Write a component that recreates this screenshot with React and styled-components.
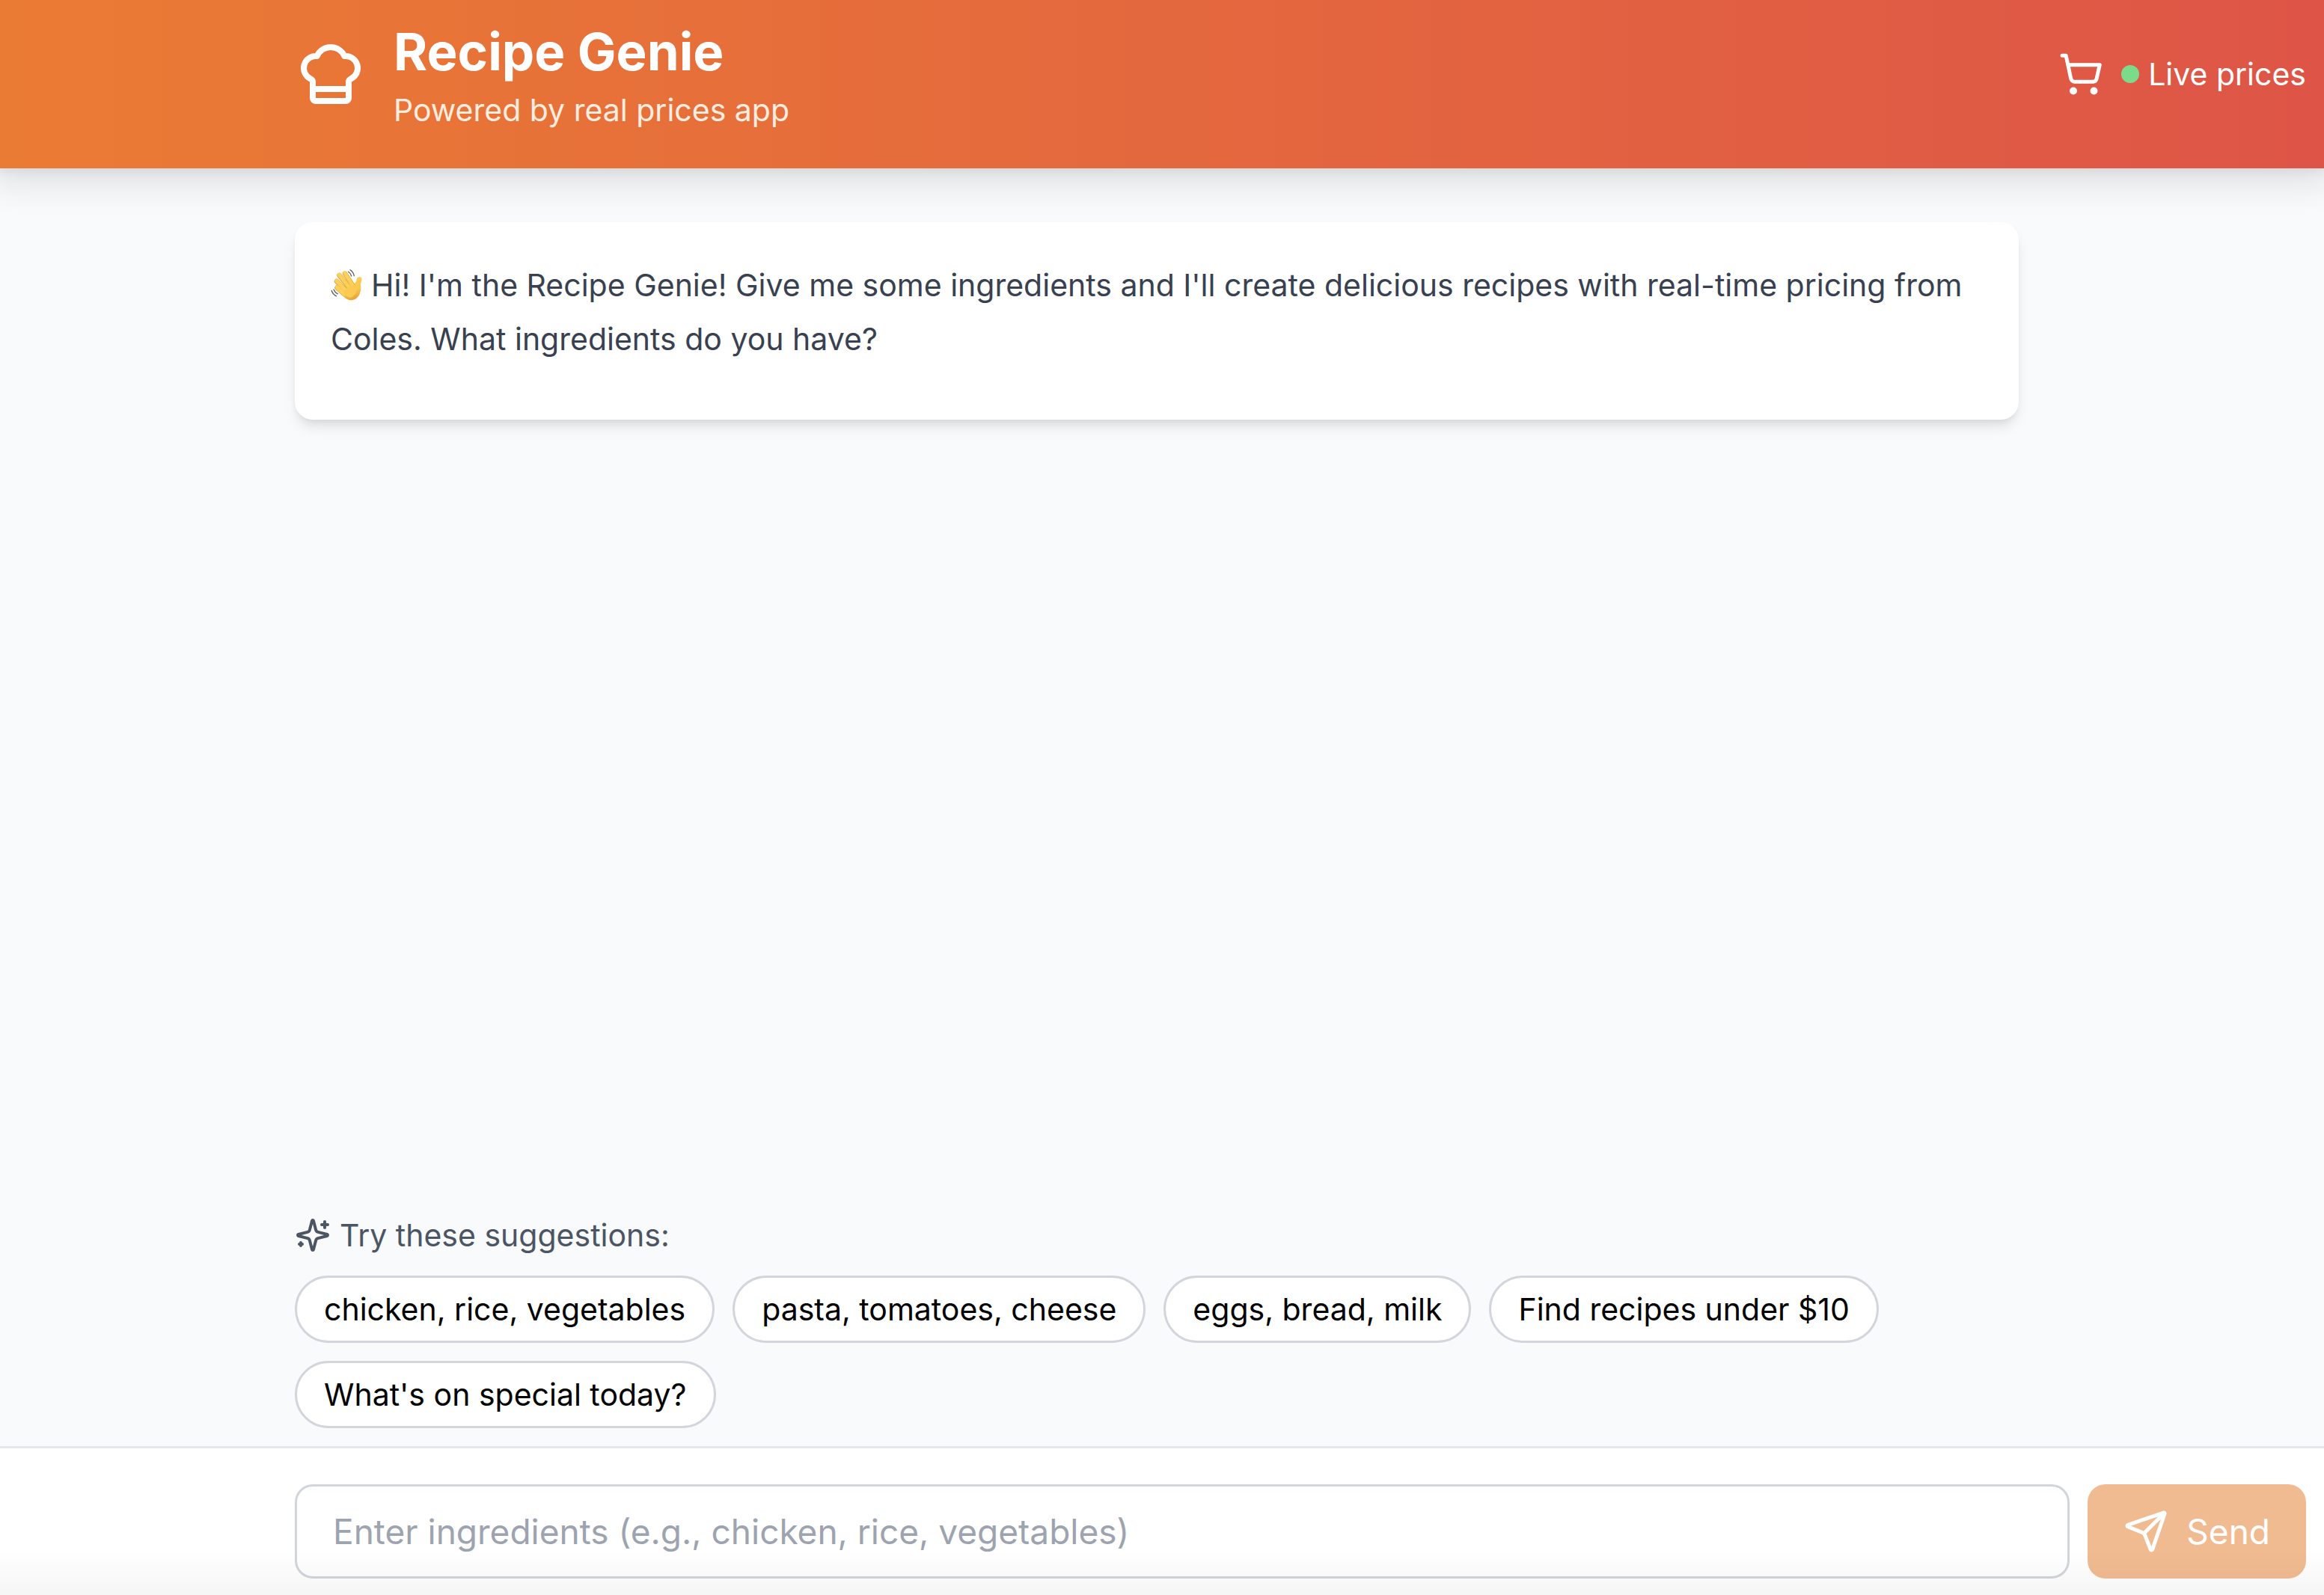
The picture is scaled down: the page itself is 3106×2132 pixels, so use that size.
import React, { useState } from "react";
import styled, { createGlobalStyle } from "styled-components";
import { ChefHat, ShoppingCart, Send } from "lucide-react";

const GlobalStyle = createGlobalStyle`
  *, *::before, *::after { box-sizing: border-box; }
  body {
    margin: 0;
    background: #f9fafc;
    font-family: Inter, "Liberation Sans", sans-serif;
    color: #000;
  }
  button, input { font: inherit; }
  h1, p { margin: 0; }
`;

const Page = styled.div`
  display: flex;
  flex-direction: column;
  height: 100vh;
  overflow: hidden;
`;

const Container = styled.div`
  width: 100%;
  max-width: 2712px;
  margin-left: auto;
  padding-right: 24px;
`;

const Header = styled.header`
  background: linear-gradient(to right, #ea7b34, #de5547);
  color: #fff;
  padding: 21px 0 48px;
  box-shadow: 0 9px 45px 12px rgba(0, 0, 0, 0.1), 0 -6px 18px 6px rgba(0, 0, 0, 0.1);
`;

const HeaderRow = styled(Container)`
  display: flex;
  align-items: center;
  justify-content: space-between;
`;

const Brand = styled.div`
  display: flex;
  align-items: center;
  gap: 36px;
`;

const Title = styled.h1`
  font-size: 69px;
  line-height: 96px;
  font-weight: 700;
`;

const Tagline = styled.p`
  font-size: 41px;
  line-height: 60px;
  color: #fdede0;
`;

const Status = styled.div`
  display: flex;
  align-items: center;
  gap: 24px;
`;

const LiveLabel = styled.span`
  display: flex;
  align-items: center;
  gap: 12px;
  font-size: 41px;
  line-height: 60px;
`;

const LiveDot = styled.span`
  width: 24px;
  height: 24px;
  border-radius: 50%;
  background: #7bdb8b;
`;

const Messages = styled.main`
  flex: 1;
  min-height: 0;
  padding-top: 72px;
`;

const Message = styled.article`
  max-width: 2304px;
  padding: 48px 48px 72px;
  border-radius: 24px;
  background: #fff;
  color: #394150;
  font-size: 41px;
  line-height: 72px;
  box-shadow: 0 12px 18px -3px rgba(0, 0, 0, 0.1), 0 6px 12px -6px rgba(0, 0, 0, 0.1);
`;

const Wave = styled.svg`
  width: 42px;
  height: 42px;
  margin-right: 12px;
  vertical-align: -6px;
`;

const Suggestions = styled.section`
  padding-bottom: 24px;
`;

const Hint = styled.p`
  display: flex;
  align-items: center;
  gap: 12px;
  margin-bottom: 24px;
  font-size: 41px;
  line-height: 60px;
  color: #4c5563;
`;

const SparkleIcon = styled.svg`
  width: 48px;
  height: 48px;
  fill: none;
  stroke: currentColor;
  stroke-width: 2;
  stroke-linecap: round;
  stroke-linejoin: round;
`;

const Chips = styled.div`
  display: flex;
  flex-wrap: wrap;
  gap: 24px;
`;

const Chip = styled.button`
  padding: 12px 36px;
  border: 3px solid #d2d5dc;
  border-radius: 45px;
  background: #fff;
  color: #000;
  font-size: 41px;
  line-height: 60px;
  cursor: pointer;
`;

const Composer = styled.footer`
  position: relative;
  padding: 48px 0 22px;
  border-top: 3px solid #e5e7ea;
  background: #fff;

  &::after {
    content: "";
    position: absolute;
    inset: auto 0 0;
    height: 60px;
    background: linear-gradient(to bottom, rgba(0, 0, 0, 0), rgba(0, 0, 0, 0.04));
    pointer-events: none;
  }
`;

const Form = styled.form`
  display: flex;
  gap: 24px;
`;

const Field = styled.input`
  flex: 1;
  min-width: 0;
  height: 126px;
  padding: 0 48px;
  border: 3px solid #d2d5dc;
  border-radius: 24px;
  background: #fff;
  font-size: 46px;
  line-height: 72px;

  &::placeholder { color: #9da3af; opacity: 1; }
`;

const SendButton = styled.button`
  display: flex;
  align-items: center;
  gap: 24px;
  padding: 0 48px;
  border: 0;
  border-radius: 24px;
  background: #f1bb91;
  color: #fff;
  font-size: 46px;
  line-height: 72px;
`;

const suggestions = [
  "chicken, rice, vegetables",
  "pasta, tomatoes, cheese",
  "eggs, bread, milk",
  "Find recipes under $10",
  "What's on special today?",
];

function WavingHand() {
  return (
    <Wave viewBox="0 0 42 42" role="img" aria-label="Waving hand">
      <defs>
        <linearGradient id="palm" x1="0" y1="0" x2="0.3" y2="1">
          <stop offset="0" stopColor="#fdd35c" />
          <stop offset="0.7" stopColor="#f8c64d" />
          <stop offset="1" stopColor="#e9a93a" />
        </linearGradient>
      </defs>
      <path
        d="M15 24 29 17.500C31.500 20 33.300 18.500 34 15.500c.7-3.200 2-5.500 4.600-5.500 2.700.1 3.500 2.300 2.800 4.600-.8 2.800-1.600 5-1.300 8.400.8 9-3.600 17.400-11.600 18.300C22.500 42 17 37 12 31Z"
        fill="url(#palm)"
      />
      <g stroke="#dfa035" strokeWidth="6.400" strokeLinecap="round" fill="none">
        <path d="M8.500 24.500 17 32" />
        <path d="M8 16 20 28" />
        <path d="M11.500 8 25 25" />
        <path d="M19 5.500 29 21" />
      </g>
      <g stroke="#fdd05a" strokeWidth="5.200" strokeLinecap="round" fill="none">
        <path d="M8.500 24 18 33" />
        <path d="M8 15.500 21 29" />
        <path d="M11.500 7.500 26 26" />
        <path d="M19 5 30 23" />
      </g>
      <path d="M17 31 21 25 30 20 36 24 33 33 27 38 21 36Z" fill="#fbca52" />
      <g stroke="#5a5a5a" strokeWidth="1.300" strokeLinecap="round" fill="none">
        <path d="M23.500 3.200c2.200 1.200 3.600 3.200 4.200 5.800M26 .8c2.800 1.800 4.600 4.500 5.300 7.800" />
        <path d="M4 27c1 2.700 2.800 4.600 5.300 5.800M1.200 28.500c1 3.300 3.200 5.800 6.300 7.300" />
      </g>
    </Wave>
  );
}

function Sparkles() {
  return (
    <SparkleIcon viewBox="0 0 24 24" aria-hidden="true">
      <path d="M9.937 15.5A2 2 0 0 0 8.5 14.063l-6.135-1.582a.5.5 0 0 1 0-.962L8.5 9.936A2 2 0 0 0 9.937 8.5l1.582-6.135a.5.5 0 0 1 .963 0L14.063 8.5A2 2 0 0 0 15.5 9.937l6.135 1.581a.5.5 0 0 1 0 .964L15.5 14.063a2 2 0 0 0-1.437 1.437l-1.582 6.135a.5.5 0 0 1-.963 0z" />
      <path d="M20 3v4M22 5h-4M4 17v2M5 18H3" />
    </SparkleIcon>
  );
}

export default function App() {
  const [text, setText] = useState("");
  return (
    <>
      <GlobalStyle />
      <Page>
        <Header>
          <HeaderRow>
            <Brand>
              <ChefHat size={96} aria-hidden="true" />
              <div>
                <Title>Recipe Genie</Title>
                <Tagline>Powered by real prices app</Tagline>
              </div>
            </Brand>
            <Status>
              <ShoppingCart size={60} aria-hidden="true" />
              <LiveLabel>
                <LiveDot />
                Live prices
              </LiveLabel>
            </Status>
          </HeaderRow>
        </Header>
        <Messages>
          <Container>
            <Message>
              <p>
                <WavingHand />
                Hi! I'm the Recipe Genie! Give me some ingredients and I'll create delicious
                recipes with real-time pricing from Coles. What ingredients do you have?
              </p>
            </Message>
          </Container>
        </Messages>
        <Suggestions>
          <Container>
            <Hint>
              <Sparkles />
              Try these suggestions:
            </Hint>
            <Chips>
              {suggestions.map((label) => (
                <Chip key={label} type="button" onClick={() => setText(label)}>
                  {label}
                </Chip>
              ))}
            </Chips>
          </Container>
        </Suggestions>
        <Composer>
          <Container>
            <Form onSubmit={(event) => event.preventDefault()}>
              <Field
                type="text"
                aria-label="Ingredients"
                placeholder="Enter ingredients (e.g., chicken, rice, vegetables)"
                value={text}
                onChange={(event) => setText(event.target.value)}
              />
              <SendButton type="submit" disabled={!text}>
                <Send size={60} aria-hidden="true" />
                Send
              </SendButton>
            </Form>
          </Container>
        </Composer>
      </Page>
    </>
  );
}
